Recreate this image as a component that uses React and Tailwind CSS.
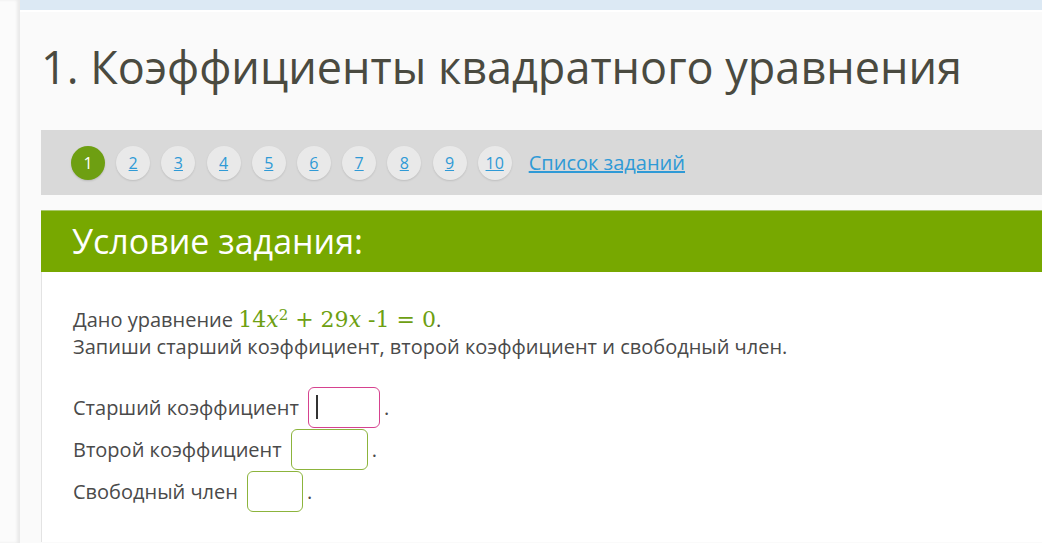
export default function App() {
  const pages = ["1", "2", "3", "4", "5", "6", "7", "8", "9", "10"];
  const rows = [
    { label: "Старший коэффициент", w: "w-[72px]", border: "border-[#d6428f]", caret: true },
    { label: "Второй коэффициент", w: "w-[77px]", border: "border-[#8cb43c]" },
    { label: "Свободный член", w: "w-[56px]", border: "border-[#8cb43c]" },
  ];

  return (
    <div className="flex min-h-[543px] w-full overflow-hidden bg-white font-['Open_Sans',sans-serif]">
      <div className="w-[20px] shrink-0 bg-[#fbfbfb] shadow-[inset_-3px_0_3px_rgba(0,0,0,0.07)]" />

      <main className="flex-1 bg-[#fafafa]">
        <div className="h-[10px] bg-[#dce9f4]" />
        <div className="h-[2px] bg-white" />

        <h1 className="pl-[21px] pt-[25px] pb-[33px] text-[45px] leading-[60px] text-[#4a4a40]">
          1. Коэффициенты квадратного уравнения
        </h1>

        <nav className="ml-[21px] flex h-[65px] items-center bg-[#d9d9d9] pl-[30px]">
          <div className="flex items-center gap-[11.2px]">
            {pages.map((p, i) =>
              i === 0 ? (
                <span
                  key={p}
                  className="flex h-[34px] w-[34px] items-center justify-center rounded-full bg-[#6e9f12] text-[16px] text-white shadow-[0_1px_2px_rgba(0,0,0,0.15)]"
                >
                  {p}
                </span>
              ) : (
                <a
                  key={p}
                  href="#"
                  className="flex h-[34px] w-[34px] items-center justify-center rounded-full bg-[#e9e9e9] text-[16px] text-[#2f9ad6] underline shadow-[0_1px_2px_rgba(0,0,0,0.12)]"
                >
                  {p}
                </a>
              )
            )}
          </div>
          <a href="#" className="ml-[17px] text-[20px] text-[#2f9ad6] underline">
            Список заданий
          </a>
        </nav>

        <section className="ml-[21px] mt-[15px]">
          <div className="flex h-[62px] items-center border-t border-[#a8c86a] bg-[#77a800] pl-[31px]">
            <h2 className="text-[34px] text-white">Условие задания:</h2>
          </div>

          <div className="border-l border-[#e3e3e3] bg-white pl-[31px] pt-[34px] pb-[30px] text-[20px] leading-[27px] text-[#4a4a4a]">
            <p>
              Дано уравнение{" "}
              <span className="font-['DejaVu_Serif',serif] text-[22px] text-[#6e9f12]">
                14<i>x</i>
                <sup className="text-[15px]">2</sup> + 29<i>x</i> -1 = 0
              </span>
              .
            </p>
            <p>Запиши старший коэффициент, второй коэффициент и свободный член.</p>

            <div className="mt-[26px] flex flex-col">
              {rows.map((r) => (
                <div key={r.label} className="flex h-[42px] items-center">
                  <span>{r.label}</span>
                  <span
                    className={`ml-[9px] flex h-[41px] items-center rounded-[6px] border bg-white pl-[7px] ${r.w} ${r.border}`}
                  >
                    {r.caret ? <span className="h-[24px] w-[2px] bg-[#333]" /> : null}
                  </span>
                  <span className="ml-[4px]">.</span>
                </div>
              ))}
            </div>
          </div>
        </section>
      </main>
    </div>
  );
}
